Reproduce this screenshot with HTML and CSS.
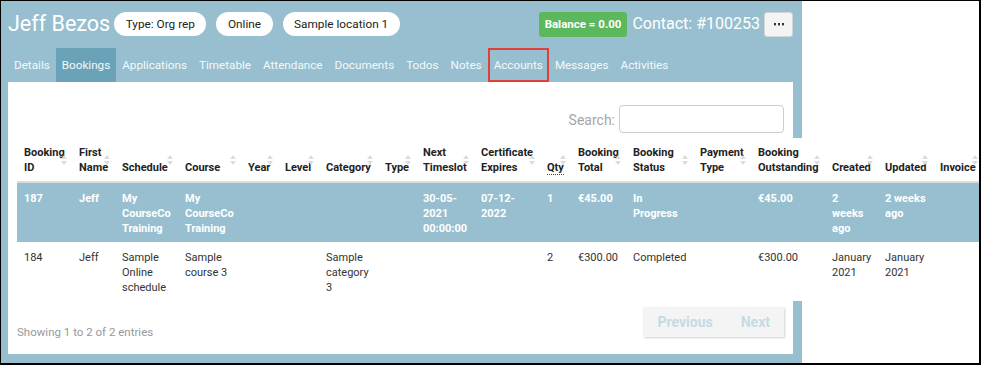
FILE: index.html
```html
<!DOCTYPE html>
<html lang="en">
<head>
  <meta charset="UTF-8" />
  <title>Jeff Bezos - Bookings</title>
  <link rel="stylesheet" href="styles.css">
</head>
<body>
  <div class="frame">
    <div class="panel">
      <header class="topbar">
        <h1 class="name">Jeff Bezos</h1>
        <span class="pill">Type: Org rep</span>
        <span class="pill">Online</span>
        <span class="pill">Sample location 1</span>
        <div class="topbar-right">
          <span class="balance">Balance = 0.00</span>
          <span class="contact">Contact: #100253</span>
          <button class="more" type="button">
            <svg width="10" height="3" viewBox="0 0 10 3"><rect x="0" y="0" width="2" height="2.4"/><rect x="4" y="0" width="2" height="2.4"/><rect x="8" y="0" width="2" height="2.4"/></svg>
          </button>
        </div>
      </header>

      <nav class="tabs">
        <a class="tab">Details</a>
        <a class="tab active">Bookings</a>
        <a class="tab">Applications</a>
        <a class="tab">Timetable</a>
        <a class="tab">Attendance</a>
        <a class="tab">Documents</a>
        <a class="tab">Todos</a>
        <a class="tab">Notes</a>
        <a class="tab marked">Accounts</a>
        <a class="tab">Messages</a>
        <a class="tab">Activities</a>
      </nav>

      <div class="card">
        <div class="search-row">
          <label class="search-label">Search:</label>
          <input class="search-input" type="text" />
        </div>

        <table class="bookings">
          <colgroup>
            <col style="width:55px"><col style="width:43px"><col style="width:63px"><col style="width:63px">
            <col style="width:37px"><col style="width:41px"><col style="width:59px"><col style="width:38px">
            <col style="width:58px"><col style="width:66px"><col style="width:31px"><col style="width:55px">
            <col style="width:67px"><col style="width:58px"><col style="width:74px"><col style="width:53px">
            <col style="width:55px"><col style="width:50px">
          </colgroup>
          <thead>
            <tr>
              <th>Booking ID</th>
              <th>First Name</th>
              <th>Schedule</th>
              <th>Course</th>
              <th>Year</th>
              <th>Level</th>
              <th>Category</th>
              <th>Type</th>
              <th>Next Timeslot</th>
              <th>Certificate Expires</th>
              <th><abbr class="qty">Qty</abbr></th>
              <th>Booking Total</th>
              <th>Booking Status</th>
              <th>Payment Type</th>
              <th>Booking Outstanding</th>
              <th>Created</th>
              <th>Updated</th>
              <th>Invoice</th>
            </tr>
          </thead>
          <tbody>
            <tr class="selected">
              <td>187</td>
              <td>Jeff</td>
              <td>My CourseCo Training</td>
              <td>My CourseCo Training</td>
              <td></td>
              <td></td>
              <td></td>
              <td></td>
              <td>30-05-2021 00:00:00</td>
              <td>07-12-2022</td>
              <td>1</td>
              <td>€45.00</td>
              <td>In Progress</td>
              <td></td>
              <td>€45.00</td>
              <td>2 weeks ago</td>
              <td>2 weeks ago</td>
              <td></td>
            </tr>
            <tr>
              <td>184</td>
              <td>Jeff</td>
              <td>Sample Online schedule</td>
              <td>Sample course 3</td>
              <td></td>
              <td></td>
              <td>Sample category 3</td>
              <td></td>
              <td></td>
              <td></td>
              <td>2</td>
              <td>€300.00</td>
              <td>Completed</td>
              <td></td>
              <td>€300.00</td>
              <td>January 2021</td>
              <td>January 2021</td>
              <td></td>
            </tr>
          </tbody>
        </table>

        <div class="table-footer">
          <div class="info">Showing 1 to 2 of 2 entries</div>
          <div class="pager">
            <a class="page-btn">Previous</a>
            <a class="page-btn">Next</a>
          </div>
        </div>
      </div>
    </div>
  </div>
</body>
</html>
```

FILE: styles.css
```css
html, body {
  margin: 0; padding: 0;
  background: #fff;
  font-family: Roboto, "Liberation Sans", sans-serif;
}

.frame {
  box-sizing: border-box;
  width: 981px; height: 365px;
  border: solid #000;
  border-width: 1px 2px 2px 1px;
  background: #fff;
  overflow: hidden;
}

.panel {
  box-sizing: border-box;
  width: 801px; height: 100%;
  padding: 0 9px 0 7px;
  background: #97bfcf;
}

/* header line */
.topbar {
  display: flex;
  align-items: center;
  height: 47px;
  padding-bottom: 2px;
  box-sizing: border-box;
}

.name {
  margin: 0 4px 0 0;
  font-size: 21.5px;
  font-weight: 400;
  color: #fff;
}

.pill {
  height: 24px;
  line-height: 24px;
  padding: 0 11.5px;
  margin-right: 10px;
  border-radius: 12px;
  background: #fff;
  color: #222;
  font-size: 11.8px;
}

.topbar-right {
  margin-left: auto;
  display: flex;
  align-items: center;
  gap: 5px;
}

.balance {
  height: 25px;
  line-height: 25px;
  padding: 0 6px;
  margin-top: 2px;
  border-radius: 3px;
  background: #5cb85c;
  color: #fff;
  font-size: 11.5px;
  font-weight: 700;
}

.contact {
  color: #fff;
  font-size: 16px;
  margin-right: -1px;
}

.more {
  width: 29px; height: 25px;
  margin-top: 1px;
  padding: 0;
  border: 1px solid #d5d5d5;
  border-radius: 3px;
  background: #f4f4f4;
  display: flex;
  align-items: center;
  justify-content: center;
}

.more svg { fill: #333; }

/* tabs */
.tabs {
  display: flex;
  height: 34px;
}

.tab {
  padding: 0 6px;
  line-height: 34px;
  font-size: 11.7px;
  color: #f4f9fb;
}

.tab.active { background: #6aa3b8; }

.tab.marked {
  outline: 2px solid #e0403c;
  outline-offset: -2px;
}

/* card */
.card {
  background: #fff;
  padding: 23px 9px 17px;
}

.search-row {
  display: flex;
  justify-content: flex-end;
  align-items: center;
  gap: 4px;
  margin-bottom: 5px;
}

.search-label {
  font-size: 14px;
  color: #a5a5a5;
  padding-top: 2px;
}

.search-input {
  box-sizing: border-box;
  width: 165px; height: 28px;
  border: 1px solid #ccc;
  border-radius: 4px;
  margin: 0;
}

/* table */
.bookings {
  table-layout: fixed;
  width: 966px;
  border-collapse: collapse;
  background: #fff;
  font-size: 11px;
  line-height: 15px;
}

.bookings th {
  position: relative;
  vertical-align: bottom;
  text-align: left;
  padding: 7px 14px 6px 7px;
  color: #222;
  font-weight: 700;
  border-bottom: 2px solid #ddd;
}

.bookings th::before,
.bookings th::after {
  content: "";
  position: absolute;
  right: 5px;
  border-left: 3px solid transparent;
  border-right: 3px solid transparent;
}

.bookings th::before {
  top: calc(50% - 5px);
  border-bottom: 4px solid #dcdcdc;
}

.bookings th::after {
  top: calc(50% + 1px);
  border-top: 4px solid #dcdcdc;
}

.qty {
  text-decoration: none;
  border-bottom: 1px dotted #444;
}

.bookings td {
  vertical-align: top;
  padding: 8px 6px 6px 7px;
  color: #333;
}

.bookings tr.selected td {
  background: #97bfcf;
  color: #fff;
  font-weight: 700;
}

/* footer */
.table-footer {
  display: flex;
  justify-content: space-between;
  align-items: flex-end;
  margin-top: 6px;
}

.info {
  font-size: 11.5px;
  color: #999;
  line-height: 15px;
  margin-bottom: -3px;
}

.pager {
  display: flex;
  height: 30px;
  background: #f4f4f4;
  box-shadow: 1px 1px 2px rgba(0,0,0,0.18);
}

.page-btn {
  padding: 0 14px;
  line-height: 30px;
  font-size: 14px;
  font-weight: 700;
  color: #c5dbe4;
}
```
